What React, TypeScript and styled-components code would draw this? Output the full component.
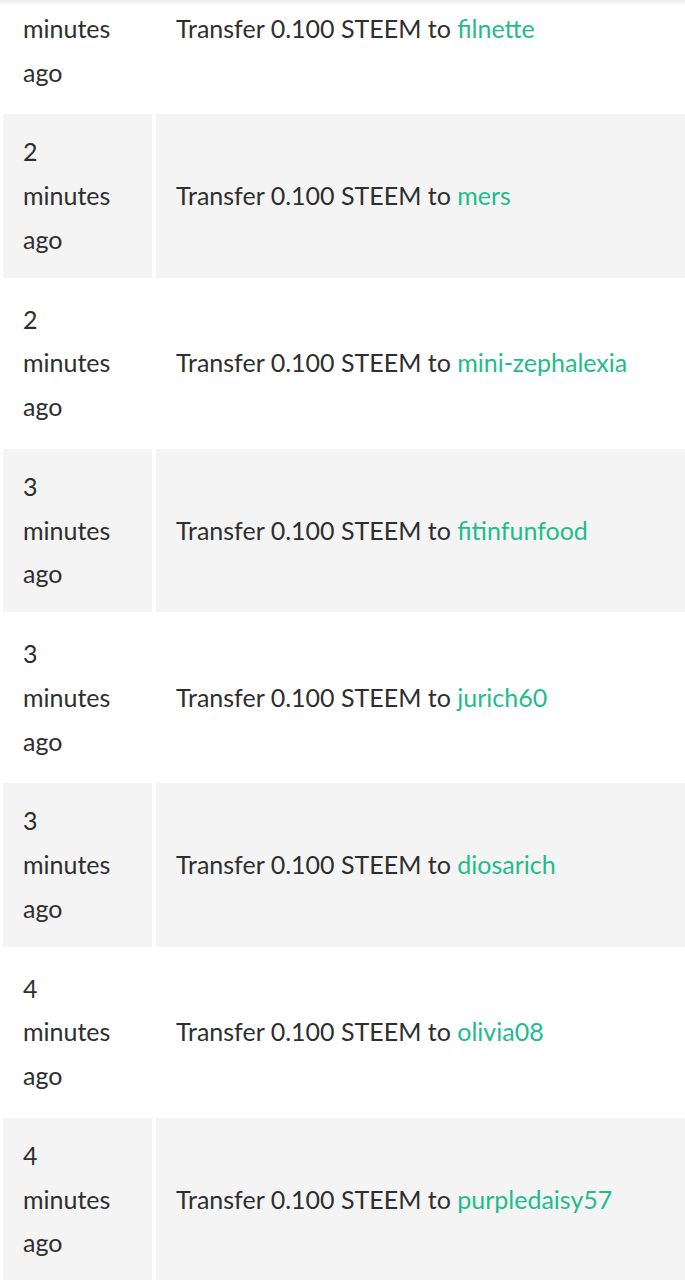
import React from "react";
import styled, { createGlobalStyle } from "styled-components";

const Global = createGlobalStyle`
  html, body {
    margin: 0;
    padding: 0;
    background: #ffffff;
    overflow-x: hidden;
  }
  body {
    font-family: Lato, "Liberation Sans", sans-serif;
    color: #333333;
  }
`;

const Page = styled.div`
  position: relative;
  width: 685px;
  overflow: hidden;
`;

const TopShade = styled.div`
  position: absolute;
  top: 0;
  left: 0;
  right: 0;
  height: 5px;
  background: linear-gradient(#ececec, rgba(255, 255, 255, 0));
  pointer-events: none;
`;

const Table = styled.table`
  border-collapse: separate;
  border-spacing: 4px;
  table-layout: fixed;
  width: 700px;
  margin: -57px 0 0 -1px;
`;

const Row = styled.tr<{ $shaded: boolean }>`
  background: ${(p) => (p.$shaded ? "#f4f4f4" : "#ffffff")};
`;

const Cell = styled.td`
  padding: 16px 20px;
  font-size: 25px;
  line-height: 43.75px;
  vertical-align: middle;
  color: #2e2e2e;
  overflow-wrap: normal;
`;

const Link = styled.a`
  color: #1fbc8c;
  text-decoration: none;
`;

const rows: { t: string; to: string }[] = [
  { t: "2", to: "filnette" },
  { t: "2", to: "mers" },
  { t: "2", to: "mini-zephalexia" },
  { t: "3", to: "fitinfunfood" },
  { t: "3", to: "jurich60" },
  { t: "3", to: "diosarich" },
  { t: "4", to: "olivia08" },
  { t: "4", to: "purpledaisy57" },
];

export default function App() {
  return (
    <Page>
      <Global />
      <Table>
        <colgroup>
          <col style={{ width: 149 }} />
          <col />
        </colgroup>
        <tbody>
          {rows.map((r, i) => (
            <Row key={i} $shaded={i % 2 === 1}>
              <Cell>
                {r.t}
                <br />
                minutes
                <br />
                ago
              </Cell>
              <Cell>
                Transfer 0.100 STEEM to <Link href="#">{r.to}</Link>
              </Cell>
            </Row>
          ))}
        </tbody>
      </Table>
      <TopShade />
    </Page>
  );
}
